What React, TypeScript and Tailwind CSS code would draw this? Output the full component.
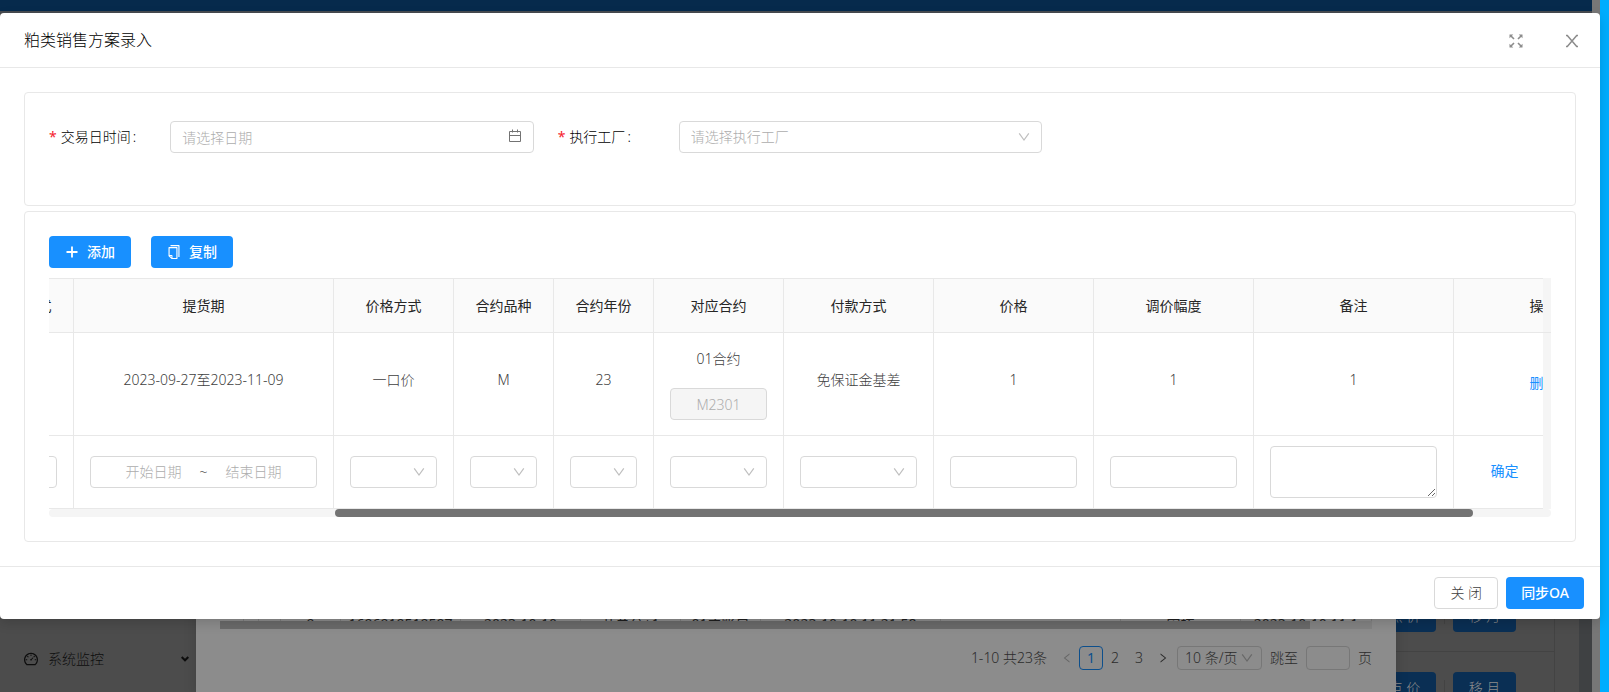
import { useLayoutEffect, useRef } from "react";
import type { ReactNode } from "react";
import { AiOutlineCopy, AiOutlineDashboard, AiOutlineLeft, AiOutlineRight } from "react-icons/ai";

const columns = [
  { title: "提货方式", width: "w-[100px]" },
  { title: "提货期", width: "w-[260px]" },
  { title: "价格方式", width: "w-[120px]" },
  { title: "合约品种", width: "w-[100px]" },
  { title: "合约年份", width: "w-[100px]" },
  { title: "对应合约", width: "w-[130px]" },
  { title: "付款方式", width: "w-[150px]" },
  { title: "价格", width: "w-[160px]" },
  { title: "调价幅度", width: "w-[160px]" },
  { title: "备注", width: "w-[200px]" },
  { title: "操作", width: "w-[180px]" },
];

// row of the list behind the dialog
const listCells = [
  { text: "", width: "w-6" },
  { text: "", width: "w-[15px]" },
  { text: "", width: "w-[22px]" },
  { text: "9", width: "w-[60px]" },
  { text: "1696919519597", width: "w-[120px]" },
  { text: "2023-10-10", width: "w-[120px]" },
  { text: "开单分+1", width: "w-[100px]" },
  { text: "01主账户", width: "w-20" },
  { text: "2023-10-10 11:21:58", width: "w-[180px]" },
  { text: "", width: "w-[180px]" },
  { text: "审核", width: "w-[120px]" },
  { text: "2023-10-10 11:1", width: "w-[131px]" },
];

const field = "h-8 w-full rounded border border-[#d9d9d9] bg-white px-[11px] outline-none";

function DownIcon({ className = "" }: { className?: string }) {
  return (
    <svg viewBox="0 0 12 12" fill="none" stroke="currentColor" strokeWidth="1.2" className={`size-3 ${className}`}>
      <path d="M1.2 2.3 6 9 10.8 2.3" />
    </svg>
  );
}

function CalendarIcon({ className = "" }: { className?: string }) {
  return (
    <svg viewBox="0 0 14 14" fill="none" stroke="currentColor" className={`size-[14px] ${className}`}>
      <path d="M1.5 2.5h11v10h-11zM1.5 6.5h11M4.5.5v3M9.5.5v3" />
    </svg>
  );
}

function FullscreenIcon() {
  return (
    <svg viewBox="0 0 16 16" stroke="currentColor" strokeWidth="1.6" fill="currentColor" className="size-4">
      <path d="M3 3l3 3M13 3l-3 3M3 13l3-3M13 13l-3-3" />
      <path
        stroke="none"
        d="M1.5 1.5h3.8L1.5 5.3zM14.5 1.5v3.8l-3.8-3.8zM1.5 14.5v-3.8l3.8 3.8zM14.5 14.5h-3.8l3.8-3.8z"
      />
    </svg>
  );
}

function CloseIcon() {
  return (
    <svg viewBox="0 0 16 16" fill="none" stroke="currentColor" strokeWidth="1.5" className="size-4">
      <path d="M2 2.5h1.3L12.7 13.500H14M14 2.5h-1.3L3.3 13.5H2" />
    </svg>
  );
}

function SelectBox({ label, id, placeholder = "" }: { label?: string; id?: string; placeholder?: string }) {
  return (
    <div className="relative w-full">
      <select id={id} aria-label={label} className={`${field} block appearance-none text-[#adadad]`}>
        <option>{placeholder}</option>
      </select>
      <DownIcon className="pointer-events-none absolute top-[10px] right-3 text-[#bfbfbf]" />
    </div>
  );
}

function FormItem({ id, label, children }: { id: string; label: string; children: ReactNode }) {
  return (
    <div className="mb-6 flex h-10 items-center">
      <label htmlFor={id} className="w-1/4 shrink-0 whitespace-nowrap text-black">
        <span className="mr-1 font-normal text-[#f5222d]">*</span>
        {label}
        <span className="ml-[2px] font-['Noto_Sans']">:</span>
      </label>
      <div className="relative flex-1">{children}</div>
    </div>
  );
}

function Cell({ children, className = "" }: { children?: ReactNode; className?: string }) {
  return (
    <td className={`border-r border-b border-[#e8e8e8] px-4 text-center ${className}`}>{children}</td>
  );
}

function Background() {
  return (
    <div className="absolute inset-0 flex overflow-hidden bg-[#4c4c4c]">
      <aside className="flex w-[196px] shrink-0 flex-col justify-end pb-[22px]">
        <button className="flex items-center pr-[7px] pl-[23px] text-left text-[#0d0d0d]">
          <AiOutlineDashboard className="size-4" />
          <span className="ml-[9px] flex-1">系统监控</span>
          <svg width="8" height="6" viewBox="0 0 8 6" fill="none" stroke="currentColor" strokeWidth="2">
            <path d="M.7 1 4 4.3 7.3 1" />
          </svg>
        </button>
      </aside>

      <section className="z-10 flex w-[1200px] shrink-0 flex-col justify-end bg-[#8c8c8c] px-6 pb-[22px] text-[#2b2b2b] shadow-[0_4px_12px_rgba(0,0,0,0.15)]">
        <div className="flex h-8 items-end overflow-hidden font-normal text-[#1f1f1f]">
          {listCells.map((cell, i) => (
            <div
              key={i}
              className={`h-full shrink-0 border-r border-[#7c7c7c] pt-6 text-center whitespace-nowrap ${cell.width}`}
            >
              {cell.text}
            </div>
          ))}
        </div>
        <div className="h-2 bg-[#838383]">
          <div className="h-full w-[1090px] bg-[#6a6a6a]" />
        </div>
        <div className="mt-[17px] flex h-6 items-center justify-end">
          <span>1-10 共23条</span>
          <button aria-label="上一页" className="ml-2 flex w-6 justify-center text-[#666]">
            <AiOutlineLeft className="size-3" />
          </button>
          <button className="h-6 w-6 rounded border border-[#0d4f8c] leading-5 font-normal text-[#0d4f8c]">1</button>
          <button className="w-6">2</button>
          <button className="w-6">3</button>
          <button aria-label="下一页" className="flex w-6 justify-center">
            <AiOutlineRight className="size-3" />
          </button>
          <div className="relative ml-[2px]">
            <select
              aria-label="每页条数"
              className="block h-6 w-[85px] appearance-none rounded border border-[#777] bg-transparent px-[7px]"
            >
              <option>10 条/页</option>
            </select>
            <DownIcon className="pointer-events-none absolute top-[6px] right-[9px] text-[#686868]" />
          </div>
          <label htmlFor="jump" className="mx-2">
            跳至
          </label>
          <input id="jump" className="h-6 w-11 rounded border border-[#777] bg-transparent" />
          <span className="ml-2">页</span>
        </div>
      </section>

      <section className="relative flex flex-1 flex-col justify-end text-[#8c8c8c]">
        <div className="mr-[37px] flex h-[52px] items-center border-r border-b border-[#434343] pb-5">
          <button className="-ml-[23px] h-8 w-[63px] rounded bg-[#0a2f54]">点 价</button>
          <span className="mx-2 h-4 w-px bg-[#434343]" />
          <button className="h-8 w-[63px] rounded bg-[#0a2f54]">移 月</button>
        </div>
        <div className="mr-[37px] flex h-10 items-start border-r border-[#434343] pt-5">
          <button className="-ml-[23px] h-8 w-[63px] shrink-0 rounded bg-[#0a2f54]">点 价</button>
          <span className="mx-2 mt-2 h-4 w-px bg-[#434343]" />
          <button className="h-8 w-[63px] shrink-0 rounded bg-[#0a2f54]">移 月</button>
        </div>
      </section>
      <div className="-ml-[13px] w-[13px] bg-[#3f4143]" />
      <div className="w-2 bg-[#777]" />
      <div className="absolute top-0 right-2 left-0 z-10 h-[13px] border-b-2 border-[#474b50] bg-[#062a4c]" />
    </div>
  );
}

export default function App() {
  const scroller = useRef<HTMLDivElement>(null);

  useLayoutEffect(() => {
    if (scroller.current) scroller.current.scrollLeft = 75;
  }, []);

  return (
    <div className="flex min-h-screen overflow-hidden bg-[#00adfe] font-['Noto_Sans','Noto_Sans_CJK_SC',sans-serif] text-[14px] leading-[22px] font-light text-[#404040]">
      <div className="relative min-w-0 flex-1 pt-[13px]">
        <Background />

        <div role="dialog" className="relative z-20 rounded bg-white shadow-[0_4px_12px_rgba(0,0,0,0.15)]">
          {/* Header */}
          <header className="flex items-center border-b border-[#e8e8e8] py-4 pr-5 pl-6">
            <h1 className="flex-1 text-[16px] leading-[22px] font-light text-black">粕类销售方案录入</h1>
            <div className="flex gap-10 pt-[2px] text-[#8c8c8c]">
              <button aria-label="全屏">
                <FullscreenIcon />
              </button>
              <button aria-label="关闭">
                <CloseIcon />
              </button>
            </div>
          </header>

          {/* Body */}
          <div className="p-6">
            <div className="grid grid-cols-3 gap-x-6 rounded-sm border border-[#e8e8e8] p-6">
              <FormItem id="tradeDate" label="交易日时间">
                <input id="tradeDate" placeholder="请选择日期" className={`${field} block placeholder:text-[#adadad]`} />
                <CalendarIcon className="pointer-events-none absolute top-2 right-3 text-[#737373]" />
              </FormItem>
              <FormItem id="factory" label="执行工厂">
                <SelectBox id="factory" placeholder="请选择执行工厂" />
              </FormItem>
            </div>

            <div className="mt-[5px] rounded-sm border border-[#e8e8e8] p-6">
              <div className="mb-[10px] flex gap-5 font-medium text-white">
                <button className="flex h-8 items-center gap-[7px] rounded bg-[#1890ff] pr-4 pl-[15px]">
                  <svg viewBox="0 0 16 16" stroke="currentColor" strokeWidth="1.8" className="size-4">
                    <path d="M8 2.5v11M2.5 8h11" />
                  </svg>
                  添加
                </button>
                <button className="flex h-8 items-center gap-[7px] rounded bg-[#1890ff] pr-4 pl-[15px]">
                  <AiOutlineCopy className="size-4" />
                  复制
                </button>
              </div>

              <div className="flex">
                <div ref={scroller} className="min-w-0 flex-1 overflow-x-auto [scrollbar-width:none]">
                  <table className="w-[1660px] table-fixed border-separate border-spacing-0">
                    <thead>
                      <tr className="h-[55px] bg-[#fafafa] text-[#262626]">
                        {columns.map((col) => (
                          <th key={col.title} className={`border-y border-r border-[#e8e8e8] font-normal ${col.width}`}>
                            {col.title}
                          </th>
                        ))}
                      </tr>
                    </thead>
                    <tbody>
                      <tr className="h-[103px]">
                        <Cell />
                        <Cell className="pb-2">2023-09-27至2023-11-09</Cell>
                        <Cell className="pb-2">一口价</Cell>
                        <Cell className="pb-2">M</Cell>
                        <Cell className="pb-2">23</Cell>
                        <Cell>
                          <div className="mb-[18px]">01合约</div>
                          <input
                            aria-label="合约代码"
                            disabled
                            defaultValue="M2301"
                            className="block h-8 w-full rounded border border-[#d9d9d9] bg-[#f5f5f5] text-center text-[#adadad]"
                          />
                        </Cell>
                        <Cell className="pb-2">免保证金基差</Cell>
                        <Cell className="pb-2">1</Cell>
                        <Cell className="pb-2">1</Cell>
                        <Cell className="pb-2">1</Cell>
                        <Cell className="pb-[2px]">
                          <a href="#" className="font-normal text-[#1890ff]">
                            删除
                          </a>
                        </Cell>
                      </tr>
                      <tr className="h-[73px]">
                        <Cell>
                          <input aria-label="提货方式" className={field} />
                        </Cell>
                        <Cell>
                          <div className="flex h-8 items-center justify-center rounded border border-[#d9d9d9]">
                            <input
                              aria-label="开始日期"
                              placeholder="开始日期"
                              className="w-20 text-center outline-none placeholder:text-[#adadad]"
                            />
                            <span className="w-5">~</span>
                            <input
                              aria-label="结束日期"
                              placeholder="结束日期"
                              className="w-20 text-center outline-none placeholder:text-[#adadad]"
                            />
                          </div>
                        </Cell>
                        {columns.slice(2, 7).map((col) => (
                          <Cell key={col.title}>
                            <SelectBox label={col.title} />
                          </Cell>
                        ))}
                        <Cell>
                          <input aria-label="价格" className={field} />
                        </Cell>
                        <Cell>
                          <input aria-label="调价幅度" className={field} />
                        </Cell>
                        <Cell>
                          <textarea
                            aria-label="备注"
                            className="block h-[52px] w-full rounded border border-[#d9d9d9] px-[11px] outline-none"
                          />
                        </Cell>
                        <Cell className="pb-[2px]">
                          <div className="flex justify-center gap-[50px] font-normal text-[#1890ff]">
                            <a href="#">确定</a>
                            <a href="#">取消</a>
                          </div>
                        </Cell>
                      </tr>
                    </tbody>
                  </table>
                </div>
                <div className="w-2 bg-[#f5f5f5]">
                  <div className="h-[55px] border-b border-[#e8e8e8]" />
                </div>
              </div>
              {/* Horizontal scrollbar */}
              <div className="h-2 rounded-sm bg-[#f5f5f5] pr-[78px] pl-[286px]">
                <div className="h-full rounded-sm bg-[#737373]" />
              </div>
            </div>
          </div>

          {/* Footer */}
          <footer className="flex justify-end gap-2 border-t border-[#e8e8e8] px-4 py-[10px]">
            <button className="h-8 rounded border border-[#d9d9d9] bg-white px-[15px]">关 闭</button>
            <button className="h-8 rounded bg-[#1890ff] px-[15px] font-medium text-white">同步OA</button>
          </footer>
        </div>
      </div>
      <div className="w-[9px] shrink-0" />
    </div>
  );
}
